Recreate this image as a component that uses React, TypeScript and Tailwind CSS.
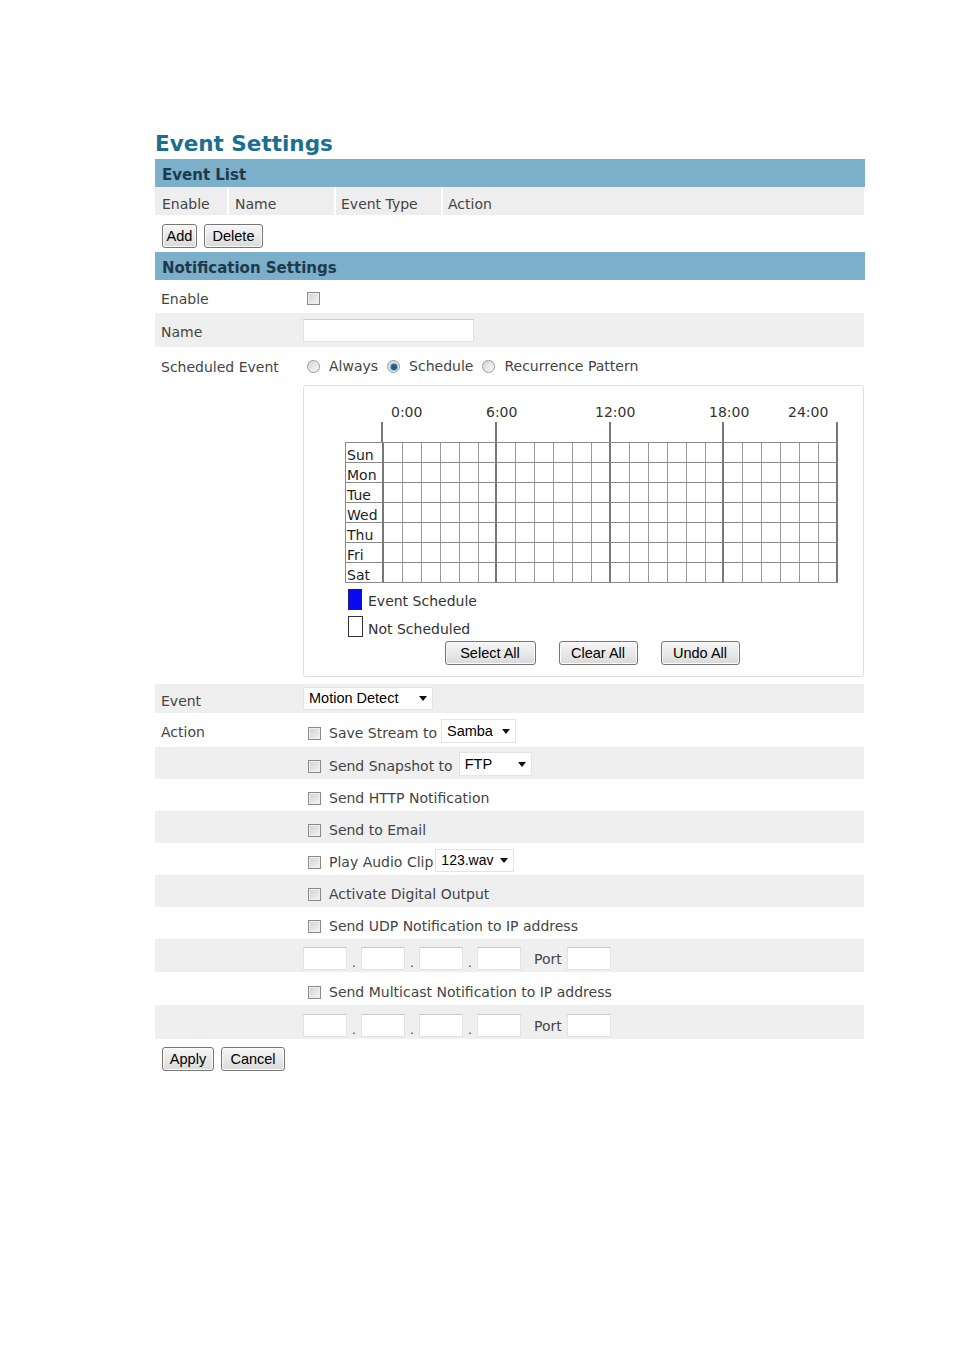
import React from "react";

const dv = "font-['DejaVu_Sans',Verdana,sans-serif]";
const ls = "font-['Liberation_Sans',Arial,sans-serif]";

function Check() {
  return (
    <span className="inline-block w-[13px] h-[13px] shrink-0 border border-[#8a8a8a] bg-linear-to-br from-[#d2d2d2] to-[#f4f4f4] shadow-[inset_0_0_0_1px_#efefef]" />
  );
}

function Radio({ on }: { on?: boolean }) {
  return (
    <span className="flex items-center justify-center w-[13px] h-[13px] shrink-0 rounded-full border border-[#9a9a9a] bg-linear-to-br from-[#d6d6d6] to-[#f8f8f8]">
      {on ? <span className="w-[6px] h-[6px] rounded-full bg-[#1f5f8f] shadow-[0_0_0_1px_#7fb0d4]" /> : null}
    </span>
  );
}

function Btn({ children, w }: { children: React.ReactNode; w: string }) {
  return (
    <button
      className={`${w} h-[24px] shrink-0 rounded-[3px] border border-[#767676] bg-linear-to-b from-[#f7f7f7] to-[#dadada] shadow-[inset_0_0_0_1px_#fbfbfb] ${ls} text-[14.5px] leading-none text-black flex items-center justify-center`}
    >
      {children}
    </button>
  );
}

function Sel({ label, w, h = "h-[24px]", size = "text-[14.5px]" }: { label: string; w: string; h?: string; size?: string }) {
  return (
    <div
      className={`${w} ${h} shrink-0 bg-white border border-[#e4e4e4] flex items-center justify-between pl-[5px] pr-[5px] ${ls} ${size} text-black`}
    >
      <span className="leading-none">{label}</span>
      <svg width="8" height="5" viewBox="0 0 8 5" className="shrink-0">
        <path d="M0 0 H8 L4 5 Z" fill="#111" />
      </svg>
    </div>
  );
}

function Input({ w }: { w: string }) {
  return <div className={`${w} h-[23px] shrink-0 bg-white border border-[#e2e2e2] border-t-[#c9c9c9]`} />;
}

function Row({
  gray,
  h,
  label,
  children,
}: {
  gray?: boolean;
  h: string;
  label?: string;
  children?: React.ReactNode;
}) {
  return (
    <div className={`flex items-center ${h} ${gray ? "bg-[#efefef]" : "bg-white"}`}>
      <div className={`w-[148px] shrink-0 pl-[6px] pt-[5px] ${dv} text-[14px] text-[#444]`}>{label}</div>
      <div className="flex items-center flex-1 min-w-0">{children}</div>
    </div>
  );
}

function ActionRow({
  gray,
  h,
  label,
  text,
  children,
}: {
  gray?: boolean;
  h: string;
  label?: string;
  text: string;
  children?: React.ReactNode;
}) {
  return (
    <Row gray={gray} h={h} label={label}>
      <div className="pl-[5px] flex items-center">
        <div className="flex items-center pt-[7px]">
          <Check />
          <span className={`ml-[8px] ${dv} text-[14px] text-[#444]`}>{text}</span>
        </div>
        {children ? <div className="pt-[2px]">{children}</div> : null}
      </div>
    </Row>
  );
}

function Dot() {
  return <span className={`w-[14px] text-center ${dv} text-[12px] text-[#444] leading-none pb-[1px]`}>.</span>;
}

function IpRow({ h }: { h: string }) {
  return (
    <Row gray h={h}>
      <div className="flex items-end pt-[2px]">
        <Input w="w-[44px]" />
        <Dot />
        <Input w="w-[44px]" />
        <Dot />
        <Input w="w-[44px]" />
        <Dot />
        <Input w="w-[44px]" />
        <span className={`ml-[13px] mr-[5px] self-center pt-[6px] ${dv} text-[14px] text-[#444]`}>Port</span>
        <Input w="w-[44px]" />
      </div>
    </Row>
  );
}

const days = ["Sun", "Mon", "Tue", "Wed", "Thu", "Fri", "Sat"];
const hours = Array.from({ length: 24 }, (_, i) => i);

function Schedule() {
  return (
    <div className="ml-[148px] mt-[3px] mb-[7px] w-[561px] h-[292px] border border-[#dedede] rounded-[3px] pl-[41px] pt-[16px]">
      <div className={`flex h-[20px] items-center pt-[1px] ${dv} text-[14px] text-[#333]`}>
        <span className="w-[46px] shrink-0" />
        <span className="w-[95px] shrink-0">0:00</span>
        <span className="w-[109px] shrink-0">6:00</span>
        <span className="w-[114px] shrink-0">12:00</span>
        <span className="w-[79px] shrink-0">18:00</span>
        <span className="shrink-0">24:00</span>
      </div>
      <div className="w-[493px] grid grid-cols-[38px_repeat(4,minmax(0,1fr))] h-[20px]">
        <div className="border-r-2 border-[#777]" />
        <div className="border-r-2 border-[#777]" />
        <div className="border-r-2 border-[#777]" />
        <div className="border-r-2 border-[#777]" />
        <div className="border-r-2 border-[#777]" />
      </div>
      <div className="w-[493px] grid grid-cols-[38px_repeat(24,minmax(0,1fr))] border-t border-l border-[#8a8a8a]">
        {days.map((d) => (
          <React.Fragment key={d}>
            <div
              className={`h-[20px] overflow-hidden border-b border-r-2 border-b-[#8a8a8a] border-r-[#777] ${dv} text-[14px] leading-[18px] pt-[3px] text-[#222] pl-[1px]`}
            >
              {d}
            </div>
            {hours.map((h) => (
              <div
                key={h}
                className={
                  h % 6 === 5
                    ? "h-[20px] border-b border-b-[#8a8a8a] border-r-2 border-r-[#777]"
                    : "h-[20px] border-b border-b-[#8a8a8a] border-r border-r-[#999]"
                }
              />
            ))}
          </React.Fragment>
        ))}
      </div>
      <div className="flex items-center mt-[6px] ml-[3px] h-[21px]">
        <span className="w-[14px] h-[21px] bg-[#0a0af0] border border-[#1a1a80]" />
        <span className={`ml-[6px] pt-[4px] ${dv} text-[14px] text-[#333]`}>Event Schedule</span>
      </div>
      <div className="flex items-center mt-[6px] ml-[3px] h-[21px]">
        <span className="w-[15px] h-[21px] bg-white border border-[#333]" />
        <span className={`ml-[5px] pt-[5px] ${dv} text-[14px] text-[#333]`}>Not Scheduled</span>
      </div>
      <div className="w-[493px] flex justify-center gap-[23px] mt-[4px] pl-[1px]">
        <Btn w="w-[91px]">Select All</Btn>
        <Btn w="w-[79px]">Clear All</Btn>
        <Btn w="w-[79px]">Undo All</Btn>
      </div>
    </div>
  );
}

export default function App() {
  return (
    <div className="w-[954px] min-h-[1350px] bg-white pt-[128px] pl-[155px]">
      <div className="w-[710px]">
        <div className={`h-[31px] flex items-center ${dv} font-bold text-[21.5px] text-[#1b6f90] leading-none`}>
          Event Settings
        </div>
        <div className={`h-[28px] bg-[#7bafca] flex items-center pl-[7px] pt-[4px] ${dv} font-bold text-[15px] text-[#1e3a4a]`}>
          Event List
        </div>
        <div className={`flex h-[28px] ${dv} text-[14px] text-[#444]`}>
          <div className="w-[72px] bg-[#eeeeee] flex items-center pt-[6px] pl-[7px]">Enable</div>
          <div className="w-[105px] ml-[2px] bg-[#eeeeee] flex items-center pt-[6px] pl-[6px]">Name</div>
          <div className="w-[105px] ml-[2px] bg-[#eeeeee] flex items-center pt-[6px] pl-[5px]">Event Type</div>
          <div className="flex-1 ml-[2px] mr-[1px] bg-[#eeeeee] flex items-center pt-[6px] pl-[5px]">Action</div>
        </div>
        <div className="h-[37px] pt-[9px] pl-[7px] flex gap-[7px]">
          <Btn w="w-[35px]">Add</Btn>
          <Btn w="w-[59px]">Delete</Btn>
        </div>
        <div className={`h-[28px] bg-[#7bafca] flex items-center pl-[7px] pt-[4px] ${dv} font-bold text-[15px] text-[#1e3a4a]`}>
          Notification Settings
        </div>
        <div className="mr-[1px]">
          <Row h="h-[33px]" label="Enable">
            <span className="ml-[4px] pt-[4px] flex">
              <Check />
            </span>
          </Row>
          <Row gray h="h-[34px]" label="Name">
            <Input w="w-[171px]" />
          </Row>
          <Row h="h-[35px]" label="Scheduled Event">
            <div className={`flex items-center pl-[4px] pt-[4px] ${dv} text-[14px] text-[#444]`}>
              <Radio />
              <span className="ml-[9px]">Always</span>
              <span className="ml-[9px] flex">
                <Radio on />
              </span>
              <span className="ml-[9px]">Schedule</span>
              <span className="ml-[9px] flex">
                <Radio />
              </span>
              <span className="ml-[9px]">Recurrence Pattern</span>
            </div>
          </Row>
          <Schedule />
          <Row gray h="h-[29px]" label="Event">
            <Sel label="Motion Detect" w="w-[130px]" h="h-[23px]" />
          </Row>
          <ActionRow h="h-[34px]" label="Action" text="Save Stream to">
            <span className="ml-[4px] flex">
              <Sel label="Samba" w="w-[75px]" />
            </span>
          </ActionRow>
          <ActionRow gray h="h-[32px]" text="Send Snapshot to">
            <span className="ml-[6px] flex">
              <Sel label="FTP" w="w-[73px]" />
            </span>
          </ActionRow>
          <ActionRow h="h-[32px]" text="Send HTTP Notification" />
          <ActionRow gray h="h-[32px]" text="Send to Email" />
          <ActionRow h="h-[32px]" text="Play Audio Clip">
            <span className="ml-[2px] flex">
              <Sel label="123.wav" w="w-[79px]" h="h-[23px]" size="text-[14px]" />
            </span>
          </ActionRow>
          <ActionRow gray h="h-[32px]" text="Activate Digital Output" />
          <ActionRow h="h-[32px]" text="Send UDP Notification to IP address" />
          <IpRow h="h-[33px]" />
          <ActionRow h="h-[33px]" text="Send Multicast Notification to IP address" />
          <IpRow h="h-[34px]" />
        </div>
        <div className="pt-[8px] pl-[7px] flex gap-[7px]">
          <Btn w="w-[52px]">Apply</Btn>
          <Btn w="w-[64px]">Cancel</Btn>
        </div>
      </div>
    </div>
  );
}
